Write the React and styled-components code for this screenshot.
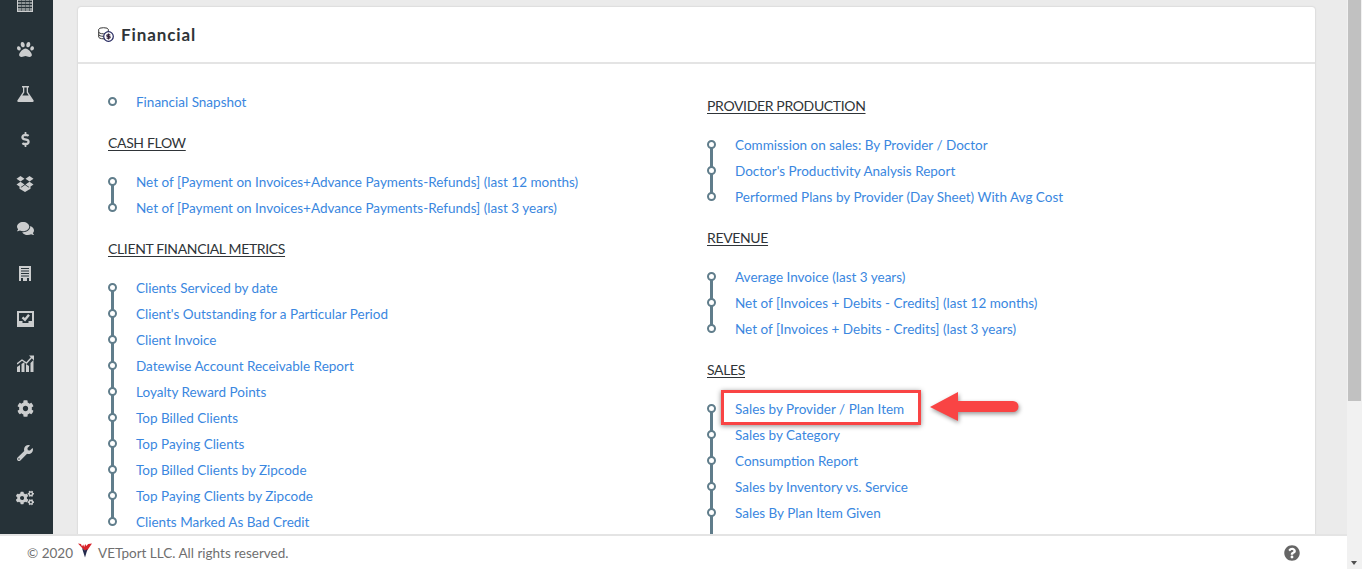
import React from 'react';
import styled, { createGlobalStyle } from 'styled-components';
import { FaPaw, FaDollarSign, FaComments, FaCog, FaWrench, FaCogs, FaQuestionCircle } from 'react-icons/fa';

const GlobalStyle = createGlobalStyle`
  html, body {
    margin: 0;
    padding: 0;
    height: 100%;
    overflow: hidden;
    font-family: "Lato", "Open Sans", sans-serif;
  }
  #root {
    height: 100%;
  }
`;

const Page = styled.div`
  display: flex;
  height: 100vh;
  overflow: hidden;
`;

const Shell = styled.div`
  flex: 1;
  min-width: 0;
  display: flex;
  flex-direction: column;
`;

const Top = styled.div`
  flex: 1;
  min-height: 0;
  display: flex;
  overflow: hidden;
`;

const Sidebar = styled.nav`
  width: 53px;
  flex-shrink: 0;
  background-color: #263238;
  display: flex;
  flex-direction: column;
  align-items: center;
  padding-right: 3px;
  box-sizing: border-box;
  color: #cbcdce;
  overflow: hidden;
`;

const SideIcon = styled.div`
  flex: 0 0 44.9px;
  display: flex;
  align-items: center;
  justify-content: center;
  font-size: 17px;
  &:first-child {
    margin-top: -18px;
  }
`;

const Main = styled.main`
  flex: 1;
  min-width: 0;
  background-color: #ebebeb;
  padding: 7px 32px 0 25px;
  overflow: hidden;
`;

const Card = styled.section`
  background-color: #fff;
  border-radius: 3px;
  box-shadow: 0 0 2px rgba(0, 0, 0, 0.2);
  min-height: 600px;
`;

const CardHeader = styled.header`
  height: 55px;
  display: flex;
  align-items: center;
  gap: 7px;
  padding: 0 0 0 20px;
  border-bottom: 2px solid #e4e4e4;
`;

const CardTitle = styled.h2`
  margin: 0;
  font-size: 17px;
  font-weight: 700;
  letter-spacing: 0.9px;
  color: #2f3438;
`;

const CardBody = styled.div`
  display: grid;
  grid-template-columns: 599px 1fr;
  padding: 25px 0 0 30px;
`;

const Column = styled.div`
  padding-top: ${(p) => p.$offset || 0}px;
`;

const SectionTitle = styled.h3`
  margin: 0 0 13px;
  height: 26px;
  line-height: 25px;
  font-size: 14px;
  font-weight: 400;
  letter-spacing: -0.35px;
  color: #2f3438;
  text-decoration: underline;
  text-underline-offset: 2px;
`;

const List = styled.ul`
  list-style: none;
  margin: 0 0 15px;
  padding: 0;
`;

const Row = styled.li`
  position: relative;
  height: 26px;
  line-height: 26px;
  padding-left: 28px;
  font-size: 13.5px;
  color: #3a87e0;

  &::before {
    content: '';
    display: ${(p) => (p.$last ? 'none' : 'block')};
    position: absolute;
    left: 3px;
    top: 12px;
    width: 3px;
    height: 26px;
    background-color: #607d8b;
  }

  &::after {
    content: '';
    position: absolute;
    left: 0;
    top: 8px;
    width: 9px;
    height: 9px;
    box-sizing: border-box;
    border: 2px solid #607d8b;
    border-radius: 50%;
    background-color: #fff;
  }
`;

const Highlight = styled.span`
  position: absolute;
  left: 14px;
  top: -6px;
  width: 200px;
  height: 35px;
  box-sizing: border-box;
  border: 3px solid #f94444;
  box-shadow: 0 1px 5px rgba(0, 0, 0, 0.45);
`;

const ArrowMark = styled.svg`
  position: absolute;
  left: 221px;
  top: -6px;
  filter: drop-shadow(1px 2px 2px rgba(0, 0, 0, 0.4));
`;

const Footer = styled.footer`
  height: 33px;
  flex-shrink: 0;
  background-color: #fff;
  border-top: 2px solid #e4e4e4;
  display: flex;
  align-items: center;
  padding: 0 47px 0 27px;
  font-size: 13.5px;
  color: #6f6f6f;
`;

const Logo = styled.svg`
  margin: -4px 6px 0 5px;
`;

const HelpIcon = styled.div`
  margin: 1px 0 0 auto;
  font-size: 16px;
  color: #666;
  display: flex;
`;

const Scrollbar = styled.div`
  width: 15px;
  flex-shrink: 0;
  background-color: #f1f1f1;
  position: relative;
`;

const Thumb = styled.div`
  margin-left: 1px;
  width: 13px;
  height: 401px;
  background-color: #c1c1c1;
`;

const ScrollArrow = styled.div`
  position: absolute;
  bottom: 4px;
  left: 4px;
  border-left: 3.5px solid transparent;
  border-right: 3.5px solid transparent;
  border-top: 4px solid #505050;
`;

const TableIcon = () => (
  <svg width="16" height="16" viewBox="0 0 16 16">
    <rect x="0.5" y="0.5" width="15" height="15" fill="#8d9496" stroke="#cbcdce" />
    {[2, 5, 8, 11].map((y) => (
      <rect key={y} x="1" y={y} width="14" height="1" fill="#263238" />
    ))}
    {[4, 8, 12].map((x) => (
      <rect key={x} x={x} y="1" width="1" height="14" fill="#263238" opacity="0.5" />
    ))}
  </svg>
);

const FlaskIcon = () => (
  <svg width="17" height="16" viewBox="0 0 17 16">
    <path
      fill="#cbcdce"
      d="M5 0h7v1.500h-1v4.500l5.500 8.300c.5.800.1 1.700-.9 1.700H1.400c-1 0-1.400-.9-.9-1.700L6 6V1.500H5z"
    />
    <path fill="#263238" d="M7.300 1.500h2.400v5l2 3H5.300l2-3z" />
  </svg>
);

const BoxesIcon = () => (
  <svg width="18" height="16" viewBox="0 0 18 16">
    <path
      fill="#cbcdce"
      d="M4.500 0L8.500 2.700 4.500 5.400.500 2.700zM13.500 0l4 2.700-4 2.700-4-2.700zM4.500 5.800l4 2.700-4 2.700-4-2.700zM13.500 5.800l4 2.700-4 2.700-4-2.700zM9 9l3.600 2.500 1.900-1v2.200L9 16l-5.500-3.300v-2.200l1.900 1z"
    />
  </svg>
);

const ReportIcon = () => (
  <svg width="13" height="15" viewBox="0 0 13 15">
    <path fill="#cbcdce" d="M0 0h12v15H0z" />
    <path fill="#263238" d="M2 2h8v1H2zM2 4.500h8v1H2zM2 7h8v1H2zM2 9.500h8v1H2zM2 12h2v3H2zM8 12h2v3H8z" />
  </svg>
);

const CheckBoxIcon = () => (
  <svg width="17" height="16" viewBox="0 0 17 16">
    <path fill="#cbcdce" d="M0 0h17v16H0z" />
    <path fill="#263238" d="M2 2h13v8h-3.500v2h-6v-2H2z" />
    <path fill="none" stroke="#cbcdce" strokeWidth="2.400" d="M5.500 6.300l2.500 2.500 4-5" />
  </svg>
);

const ChartIcon = () => (
  <svg width="17" height="17" viewBox="0 0 17 17">
    <path fill="#cbcdce" d="M0 12l3-2v7H0zM4.500 9l3-2v10h-3zM9 9l3 2v6H9zM13.500 8l3-3v12h-3z" />
    <path fill="none" stroke="#cbcdce" strokeWidth="1.400" d="M0 9l5-4 4.500 3L15 2" />
    <path fill="#cbcdce" d="M12 0.500h5v5z" />
  </svg>
);

const CoinsIcon = () => (
  <svg width="16" height="15" viewBox="0 0 16 15">
    <g fill="#fff" stroke="#3a3a3a" strokeWidth="1">
      <ellipse cx="5.500" cy="2.500" rx="4.800" ry="1.800" />
      <path d="M0.700 2.500v7.500c0 1 2 1.800 4.800 1.800s4.800-.8 4.800-1.800V2.500" />
      <path fill="none" d="M0.700 5c0 1 2 1.800 4.800 1.800S10.300 6 10.300 5M0.700 7.500c0 1 2 1.800 4.800 1.800" />
    </g>
    <circle cx="10.500" cy="9.500" r="4.800" fill="#fff" stroke="#23265e" strokeWidth="1.200" />
    <path fill="none" stroke="#33223a" strokeWidth="1.200" d="M12.300 7.800h-2.500c-1.300 0-1.300 1.700 0 1.700h1.400c1.300 0 1.300 1.700 0 1.700H8.600M10.500 6.500v6" />
  </svg>
);

const LogoMark = () => (
  <Logo width="14" height="15" viewBox="0 0 14 15">
    <path fill="#d8232a" d="M0 0.500l3 .5 1 2.500 1.200-2 1 2.500 1-3 1 2 2-2 3.800-.5-5.500 8-2.500-1.500z" />
    <path fill="#232a4d" d="M4 5l3 2.500 2.500-1.500L7 14.500z" />
  </Logo>
);

const sideIcons = [
  <TableIcon />,
  <FaPaw />,
  <FlaskIcon />,
  <FaDollarSign size={15} />,
  <BoxesIcon />,
  <FaComments />,
  <ReportIcon />,
  <CheckBoxIcon />,
  <ChartIcon />,
  <FaCog />,
  <FaWrench size={16} />,
  <FaCogs size={18} />,
];

const leftSections = [
  { links: ['Financial Snapshot'] },
  {
    title: 'CASH FLOW',
    links: [
      'Net of [Payment on Invoices+Advance Payments-Refunds] (last 12 months)',
      'Net of [Payment on Invoices+Advance Payments-Refunds] (last 3 years)',
    ],
  },
  {
    title: 'CLIENT FINANCIAL METRICS',
    links: [
      'Clients Serviced by date',
      "Client's Outstanding for a Particular Period",
      'Client Invoice',
      'Datewise Account Receivable Report',
      'Loyalty Reward Points',
      'Top Billed Clients',
      'Top Paying Clients',
      'Top Billed Clients by Zipcode',
      'Top Paying Clients by Zipcode',
      'Clients Marked As Bad Credit',
    ],
  },
];

const rightSections = [
  {
    title: 'PROVIDER PRODUCTION',
    links: [
      'Commission on sales: By Provider / Doctor',
      "Doctor's Productivity Analysis Report",
      'Performed Plans by Provider (Day Sheet) With Avg Cost',
    ],
  },
  {
    title: 'REVENUE',
    links: [
      'Average Invoice (last 3 years)',
      'Net of [Invoices + Debits - Credits] (last 12 months)',
      'Net of [Invoices + Debits - Credits] (last 3 years)',
    ],
  },
  {
    title: 'SALES',
    open: true,
    links: [
      'Sales by Provider / Plan Item',
      'Sales by Category',
      'Consumption Report',
      'Sales by Inventory vs. Service',
      'Sales By Plan Item Given',
    ],
  },
];

function Section({ section }) {
  return (
    <>
      {section.title && <SectionTitle>{section.title}</SectionTitle>}
      <List>
        {section.links.map((link, i) => (
          <Row key={link} $last={i === section.links.length - 1 && !section.open}>
            {link}
            {link === 'Sales by Provider / Plan Item' && (
              <>
                <Highlight />
                <ArrowMark width="92" height="36" viewBox="0 0 92 36">
                  <path fill="#f94444" d="M2 17L30 2v9h55a5.500 5.500 0 0 1 0 11H30v9z" />
                </ArrowMark>
              </>
            )}
          </Row>
        ))}
      </List>
    </>
  );
}

export default function App() {
  return (
    <>
      <GlobalStyle />
      <Page>
        <Shell>
          <Top>
            <Sidebar>
              {sideIcons.map((icon, i) => (
                <SideIcon key={i}>{icon}</SideIcon>
              ))}
            </Sidebar>
            <Main>
              <Card>
                <CardHeader>
                  <CoinsIcon />
                  <CardTitle>Financial</CardTitle>
                </CardHeader>
                <CardBody>
                  <Column>
                    {leftSections.map((s, i) => (
                      <Section key={i} section={s} />
                    ))}
                  </Column>
                  <Column $offset={4}>
                    {rightSections.map((s, i) => (
                      <Section key={i} section={s} />
                    ))}
                  </Column>
                </CardBody>
              </Card>
            </Main>
          </Top>
          <Footer>
            <span>© 2020</span>
            <LogoMark />
            <span>VETport LLC. All rights reserved.</span>
            <HelpIcon>
              <FaQuestionCircle />
            </HelpIcon>
          </Footer>
        </Shell>
        <Scrollbar>
          <Thumb />
          <ScrollArrow />
        </Scrollbar>
      </Page>
    </>
  );
}
